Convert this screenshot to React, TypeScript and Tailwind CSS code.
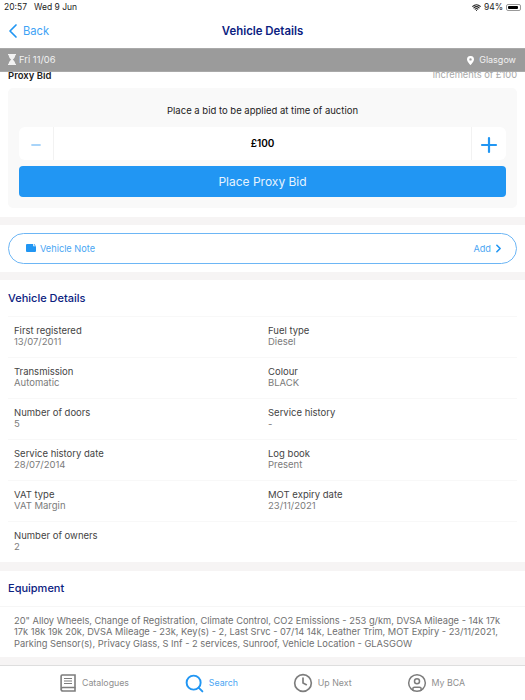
import React from 'react';
import { ChevronLeft, ChevronRight, Minus, Plus, Search, Clock, CircleUser, Wifi } from 'lucide-react';

const details = [
  [['First registered', '13/07/2011'], ['Fuel type', 'Diesel']],
  [['Transmission', 'Automatic'], ['Colour', 'BLACK']],
  [['Number of doors', '5'], ['Service history', '-']],
  [['Service history date', '28/07/2014'], ['Log book', 'Present']],
  [['VAT type', 'VAT Margin'], ['MOT expiry date', '23/11/2021']],
  [['Number of owners', '2']],
];

function BookIcon() {
  return (
    <svg width="16" height="18" viewBox="0 0 16 18" fill="none" stroke="#7d7d7d" strokeWidth="1.6">
      <path d="M2.200 1H15v12.500H2.800a1.700 1.700 0 0 0-1.700 1.700V2.200A1.200 1.200 0 0 1 2.200 1z" />
      <path d="M1.100 15a1.800 1.800 0 0 0 1.700 2H15v-3.500" />
      <path d="M4 4.500h8M4 7h8M4 9.500h8" strokeWidth="1.200" />
    </svg>
  );
}

function NoteIcon() {
  return (
    <svg width="10" height="8" viewBox="0 0 10 8" fill="#2196f3">
      <path d="M1 0h6.200v2.200H10V7a1 1 0 0 1-1 1H1a1 1 0 0 1-1-1V1a1 1 0 0 1 1-1z" />
      <path d="M8 0l2 1.500H8z" />
    </svg>
  );
}

function HourglassIcon() {
  return (
    <svg width="8" height="11" viewBox="0 0 8 11" fill="#f2f2f2">
      <path d="M0 0h8v1.200H7.200c0 1.800-1 3.200-2.400 4.300 1.400 1.100 2.400 2.500 2.400 4.300H8V11H0V9.800h.8c0-1.800 1-3.200 2.400-4.300C1.800 4.400.8 3 .8 1.200H0z" />
    </svg>
  );
}

function PinIcon() {
  return (
    <svg width="7" height="9" viewBox="0 0 7 9">
      <path fillRule="evenodd" fill="#ffffff" d="M3.500 0A3.400 3.400 0 0 1 7 3.400C7 5.500 3.500 9 3.500 9S0 5.500 0 3.400A3.400 3.400 0 0 1 3.500 0zm0 2.200a1.200 1.200 0 1 0 0 2.400 1.200 1.200 0 0 0 0-2.400z" />
    </svg>
  );
}

function TabItem({ icon, label, active }: { icon: React.ReactNode; label: string; active?: boolean }) {
  return (
    <div className="flex items-center gap-[6px]">
      {icon}
      <span className={`text-[8.8px] ${active ? 'text-[#4ba6f3]' : 'text-[#8f8f8f]'}`}>{label}</span>
    </div>
  );
}

export default function App() {
  return (
    <div className="w-[525px] h-[700px] flex flex-col overflow-hidden bg-white font-['Inter',sans-serif]">
      {/* status bar */}
      <div className="h-[14px] shrink-0 flex items-center justify-between pl-[4px] pr-[4px] text-[8.5px] text-[#222]">
        <div className="flex gap-[7px]">
          <span>20:57</span>
          <span>Wed 9 Jun</span>
        </div>
        <div className="flex items-center gap-[3px]">
          <Wifi className="w-[9px] h-[9px]" strokeWidth={3} />
          <span>94%</span>
          <div className="w-[15px] h-[7px] border border-[#999] rounded-[2px] p-[1px]">
            <div className="w-[90%] h-full bg-black rounded-[1px]" />
          </div>
        </div>
      </div>

      {/* nav */}
      <div className="h-[34px] shrink-0 relative flex items-center justify-center pt-[2px]">
        <div className="absolute left-[1px] top-[5px] flex items-center text-[#2196f3]">
          <ChevronLeft className="w-[24px] h-[24px]" strokeWidth={1.7} />
          <span className="text-[11.2px] -ml-[2px] text-[#3fa3f5]">Back</span>
        </div>
        <span className="text-[11.4px] font-semibold text-[#0b2180]">Vehicle Details</span>
      </div>

      {/* sale band */}
      <div className="h-[24px] shrink-0 bg-[#9b9b9b] border-y border-[#a9a9a9] flex items-center justify-between pl-[8px] pr-[9px] text-[#f2f2f2] z-10">
        <div className="flex items-center gap-[3px] text-[9.4px]">
          <HourglassIcon />
          <span>Fri 11/06</span>
        </div>
        <div className="flex items-center gap-[5px] text-[9px]">
          <PinIcon />
          <span>Glasgow</span>
        </div>
      </div>

      {/* scrolled content */}
      <div className="flex-1 overflow-hidden min-h-0">
        <div className="-mt-[3px]">
          <div className="flex justify-between items-start px-[8px] h-[13px]">
            <span className="text-[9.5px] leading-[13px] font-semibold text-[#222]">Proxy Bid</span>
            <span className="text-[9.3px] leading-[11px] text-[#a8a8a8]">increments of £100</span>
          </div>
          <div className="px-[8px] pt-[6px] pb-[9px]">
            <div className="bg-[#f9f9f9] rounded-[5px] px-[11px] pt-[16px] pb-[11px]">
              <p className="text-center text-[9.5px] leading-[14px] text-[#222]">Place a bid to be applied at time of auction</p>
              <div className="mt-[9px] h-[33px] bg-white rounded-[6px] flex items-center">
                <div className="w-[35px] h-full flex items-center justify-center border-r border-[#f2f2f2]">
                  <Minus className="w-[14px] h-[14px] mt-[3px] text-[#8cc6f7]" strokeWidth={2.8} />
                </div>
                <div className="flex-1 text-center text-[10px] font-semibold text-black">£100</div>
                <div className="w-[35px] h-full flex items-center justify-center border-l border-[#f2f2f2]">
                  <Plus className="w-[24px] h-[24px] mt-[3px] text-[#2196f3]" strokeWidth={2.2} />
                </div>
              </div>
              <div className="mt-[6px] h-[31px] rounded-[4px] bg-[#2196f3] flex items-center justify-center text-[12px] text-[#e6f3fe]">
                Place Proxy Bid
              </div>
            </div>
          </div>
          <div className="h-[8px] bg-[#f6f4f4]" />

          <div className="px-[8px] py-[8px]">
            <div className="h-[31px] rounded-full border border-[#6db6f5] flex items-center justify-between pl-[17px] pr-[11px] text-[9.2px] text-[#4ba6f3]">
              <div className="flex items-center gap-[4px]">
                <NoteIcon />
                <span>Vehicle Note</span>
              </div>
              <div className="flex items-center gap-[1px]">
                <span>Add</span>
                <ChevronRight className="w-[13px] h-[13px] text-[#2196f3]" strokeWidth={3} />
              </div>
            </div>
          </div>
          <div className="h-[8px] bg-[#f6f4f4]" />

          <div className="h-[36px] px-[8px] flex items-center text-[11px] font-medium text-[#0b2180]">Vehicle Details</div>
          <div className="px-[8px]">
            {details.map((row, i) => (
              <div key={i} className="grid grid-cols-[254px_1fr] h-[41px] border-t border-[#f8f8f8] pt-[8px] pl-[6px]">
                {row.map(([label, value]) => (
                  <div key={label} className="text-[9.5px]">
                    <div className="leading-[11px] text-[#444]">{label}</div>
                    <div className="leading-[12px] text-[#7b7b7b]">{value}</div>
                  </div>
                ))}
              </div>
            ))}
          </div>
          <div className="h-[9px] bg-[#f6f4f4]" />

          <div className="h-[36px] px-[8px] flex items-center text-[11px] font-medium text-[#0b2180] border-b border-[#f6f6f6]">Equipment</div>
          <div className="px-[14px] pt-[8px] h-[50px] text-[9.3px] leading-[11.3px] text-[#707070]">
            <p>20" Alloy Wheels, Change of Registration, Climate Control, CO2 Emissions - 253 g/km, DVSA Mileage - 14k 17k</p>
            <p>17k 18k 19k 20k, DVSA Mileage - 23k, Key(s) - 2, Last Srvc - 07/14 14k, Leather Trim, MOT Expiry - 23/11/2021,</p>
            <p>Parking Sensor(s), Privacy Glass, S Inf - 2 services, Sunroof, Vehicle Location - GLASGOW</p>
          </div>
          <div className="h-[9px] bg-[#f6f4f4]" />
        </div>
      </div>

      {/* tab bar */}
      <div className="h-[35px] shrink-0 border-t border-[#dedede] bg-white flex items-center pl-[60px] pr-[60px] justify-between">
        <TabItem icon={<BookIcon />} label="Catalogues" />
        <TabItem icon={<Search className="w-[21px] h-[21px] -m-[2px] text-[#2196f3]" strokeWidth={2.2} />} label="Search" active />
        <TabItem icon={<Clock className="w-[20px] h-[20px] -m-[1.5px] text-[#7d7d7d]" strokeWidth={2} />} label="Up Next" />
        <TabItem icon={<CircleUser className="w-[20px] h-[20px] -m-[1.5px] text-[#7d7d7d]" strokeWidth={1.8} />} label="My BCA" />
      </div>
    </div>
  );
}
